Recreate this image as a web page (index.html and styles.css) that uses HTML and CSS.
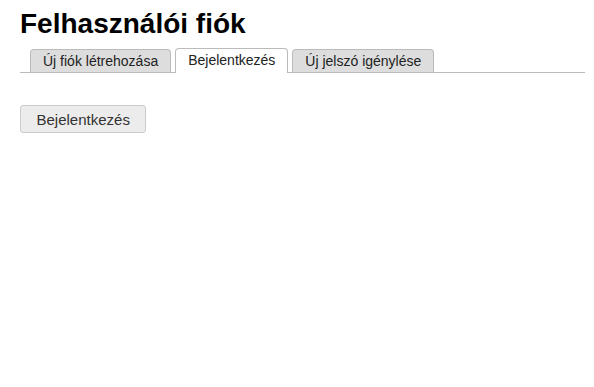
FILE: index.html
```html
<!DOCTYPE html>
<html lang="hu">
<head>
<meta charset="utf-8">
<link rel="stylesheet" href="styles.css">
</head>
<body>
<div class="page">
  <h1 class="title">Felhasználói fiók</h1>
  <ul class="tabs">
    <li class="tab">Új fiók létrehozása</li>
    <li class="tab active">Bejelentkezés</li>
    <li class="tab">Új jelszó igénylése</li>
  </ul>
  <div class="content">
    <button class="btn">Bejelentkezés</button>
  </div>
</div>
</body>
</html>
```
FILE: styles.css
```css
html, body { margin: 0; padding: 0; background: #fff; }
body { font-family: "Liberation Sans", Arial, sans-serif; color: #000; }
.page { padding: 7px 9px 0 20px; }
.title { margin: 0; font-size: 28px; font-weight: bold; line-height: 33px; }
.tabs {
  list-style: none; margin: 8px 0 0 0; padding: 0 0 0 10px;
  display: flex; gap: 4px; border-bottom: 1px solid #bbb;
}
.tab {
  font-size: 14px; line-height: 22px; padding: 0 12px;
  background: #ddd; border: 1px solid #bbb; border-bottom: none;
  border-radius: 4px 4px 0 0; color: #222; margin-top: 1px;
}
.tab.active { background: #fff; margin-top: 0; padding-bottom: 1px; margin-bottom: -1px; }
.content { padding-top: 32px; }
.btn {
  font-family: "Liberation Sans", Arial, sans-serif; font-size: 15px;
  color: #333; background: #ececec; border: 1px solid #ccc; border-radius: 3px;
  padding: 0 15.5px; height: 28px; margin: 0;
}
```
